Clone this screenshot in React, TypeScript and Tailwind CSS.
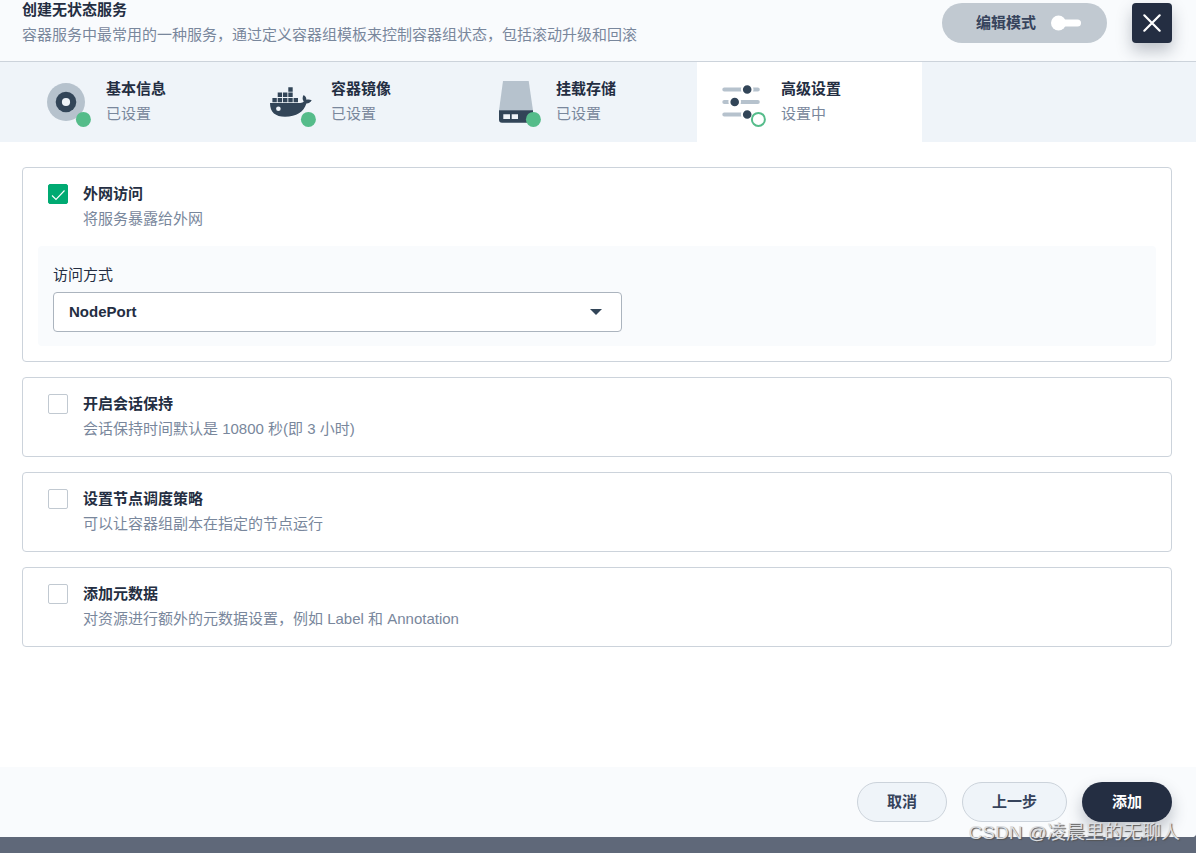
import { useState } from 'react';
import type { ReactNode } from 'react';

interface Step {
  id: string;
  title: string;
  status: string;
  done: boolean;
  icon: ReactNode;
}

const STEPS: Step[] = [
  {
    id: 'basic',
    title: '基本信息',
    status: '已设置',
    done: true,
    icon: (
      <>
        <circle cx="24" cy="26" r="19" fill="#b6c2cd" />
        <circle cx="24" cy="26" r="10.3" fill="#324558" />
        <circle cx="24" cy="26" r="4.1" fill="#eff4f9" />
      </>
    ),
  },
  {
    id: 'image',
    title: '容器镜像',
    status: '已设置',
    done: true,
    icon: (
      <g fill="#324558">
        <path d="M21.3 11.3h4.4v4.4h-4.4zM10.7 16.6h4.4v4.4h-4.4zM16 16.6h4.4v4.4H16zM21.3 16.6h4.4v4.4h-4.4zM5.4 21.9h4.4v4.4H5.4zM10.7 21.9h4.4v4.4h-4.4zM16 21.9h4.4v4.4H16zM21.3 21.9h4.4v4.4h-4.4zM26.6 21.9H31v4.4h-4.4z" />
        <path d="M3 27h30.2c1.8 0 3-.5 3.6-1.4-1.6-2-1.5-4.6-.1-6.6 1.8 1.2 2.7 2.8 2.7 4.7 1.9-.5 3.7-.3 5.3.6-.9 2-2.7 3.1-5.3 3.2C36.6 36 29.5 40.700 18 40.700 8.500 40.700 3 36.500 3 27z" />
        <circle cx="11.4" cy="32.7" r="2.3" fill="#eff4f9" />
      </g>
    ),
  },
  {
    id: 'volume',
    title: '挂载存储',
    status: '已设置',
    done: true,
    icon: (
      <>
        <path d="M11 5h25.700L41 34.500H7z" fill="#b6c2cd" />
        <path d="M7 34.300h34v9.400a3 3 0 0 1-3 3H10a3 3 0 0 1-3-3z" fill="#324558" />
        <path d="M11.300 38.300H18V43h-6.700zM19.700 38.300H26V43h-6.300z" fill="#eff4f9" />
      </>
    ),
  },
  {
    id: 'advanced',
    title: '高级设置',
    status: '设置中',
    done: false,
    icon: (
      <>
        <path d="M7.300 13.500h33.500M7.300 26h33.500M7.300 38.500h22" stroke="#b6c2cd" strokeWidth="4" strokeLinecap="round" />
        <g fill="#324558" stroke="#fff" strokeWidth="2">
          <circle cx="30.200" cy="13.500" r="5.300" />
          <circle cx="17.700" cy="26" r="5.300" />
          <circle cx="30.200" cy="38.500" r="5.300" />
        </g>
      </>
    ),
  },
];

function StepTab({ step, active, onSelect }: { step: Step; active: boolean; onSelect: () => void }) {
  return (
    <button
      type="button"
      aria-current={active ? 'step' : undefined}
      onClick={onSelect}
      className={`flex h-20 w-[225px] shrink-0 items-center gap-3 pl-5 text-left ${active ? 'bg-white' : ''}`}
    >
      <svg viewBox="0 0 52 52" fill="none" className="h-[52px] w-[52px]" aria-hidden="true">
        {step.icon}
        {step.done ? (
          <circle cx="41.4" cy="43.4" r="7.5" fill="#55bc8a" />
        ) : (
          <circle cx="41.4" cy="43.4" r="6.5" fill="#fff" stroke="#55bc8a" strokeWidth="2" />
        )}
      </svg>
      <span className="flex flex-col gap-[5px] pb-[2px]">
        <span className="font-bold">{step.title}</span>
        <span className="text-[#79879c]">{step.status}</span>
      </span>
    </button>
  );
}

interface OptionCardProps {
  id: string;
  title: string;
  description: string;
  defaultChecked?: boolean;
  children?: ReactNode;
}

function OptionCard({ id, title, description, defaultChecked = false, children }: OptionCardProps) {
  const [checked, setChecked] = useState(defaultChecked);

  return (
    <section className="rounded border border-[#ccd3db] bg-white">
      <div className="flex items-start gap-[15px] px-[25px] pt-4 pb-[17px]">
        <span className="relative h-5 w-5 shrink-0">
          <input
            id={id}
            type="checkbox"
            checked={checked}
            onChange={(e) => setChecked(e.target.checked)}
            className="block h-5 w-5 appearance-none rounded-xs border border-[#c1c9d1] bg-white checked:border-[#00aa72] checked:bg-[#00aa72]"
          />
          {checked && (
            <svg viewBox="0 0 20 20" fill="none" className="pointer-events-none absolute inset-0 h-5 w-5" aria-hidden="true">
              <path d="M4 11.5l4 4 8.5-9" stroke="#fff" strokeWidth="1.1" />
            </svg>
          )}
        </span>
        <label htmlFor={id} className="flex flex-col gap-[5px]">
          <span className="font-bold">{title}</span>
          <span className="text-[#79879c]">{description}</span>
        </label>
      </div>
      {checked && children}
    </section>
  );
}

export default function App() {
  const [current, setCurrent] = useState('advanced');

  return (
    <div className="relative flex min-h-screen flex-col bg-[#5f6879] pb-4 font-['Liberation_Sans','Noto_Sans_CJK_SC',sans-serif] text-[15px] leading-5 text-[#242e42]">
      <div className="flex flex-1 flex-col rounded-br bg-white">
        <header className="flex items-start justify-between border-b border-[#ccd3db] bg-[#f9fbfd] pr-6 pb-4 pl-[22px]">
          <div className="flex flex-col gap-[5px]">
            <h1 className="font-bold">创建无状态服务</h1>
            <p className="text-[#79879c]">容器服务中最常用的一种服务，通过定义容器组模板来控制容器组状态，包括滚动升级和回滚</p>
          </div>
          <div className="flex gap-[25px] pt-[3px]">
            <button
              type="button"
              className="flex h-10 w-[165px] items-center justify-center gap-[15px] rounded-full bg-[#c1c9d1] pl-2 font-bold text-[#36435c]"
            >
              编辑模式
              <svg viewBox="0 0 30 16" className="h-4 w-[30px]" fill="#fff" aria-hidden="true">
                <rect x="8" y="4.5" width="22" height="7" rx="3.5" />
                <circle cx="7.5" cy="8" r="7.5" />
              </svg>
            </button>
            <button
              type="button"
              aria-label="关闭"
              className="flex h-10 w-10 items-center justify-center rounded bg-[#242e42] shadow-[0_8px_16px_rgba(36,46,66,0.28)]"
            >
              <svg viewBox="0 0 20 20" className="h-5 w-5" fill="none" aria-hidden="true">
                <path d="M2.3 2.3l15.4 15.4M17.7 2.3L2.3 17.7" stroke="#fff" strokeWidth="2.2" strokeLinecap="round" />
              </svg>
            </button>
          </div>
        </header>

        <nav className="flex bg-[#eff4f9] pl-[22px]">
          {STEPS.map((step) => (
            <StepTab key={step.id} step={step} active={step.id === current} onSelect={() => setCurrent(step.id)} />
          ))}
        </nav>

        <main className="flex flex-1 flex-col gap-[15px] pt-[25px] pr-6 pb-[25px] pl-[22px]">
          <OptionCard id="internet" title="外网访问" description="将服务暴露给外网" defaultChecked>
            <div className="mx-[15px] mb-[15px] rounded bg-[#f9fbfd] px-[15px] pt-[19px] pb-[14px]">
              <label htmlFor="access-mode" className="mb-[7px] block">
                访问方式
              </label>
              <div className="relative max-w-[569px]">
                <select
                  id="access-mode"
                  defaultValue="NodePort"
                  className="block h-10 w-full appearance-none rounded border border-[#abb4be] bg-white px-[15px] font-bold"
                >
                  <option>NodePort</option>
                  <option>LoadBalancer</option>
                </select>
                <svg viewBox="0 0 12 6" className="pointer-events-none absolute top-[17px] right-5 h-[6px] w-3" aria-hidden="true">
                  <path d="M0 0h12L6 6z" fill="#324558" />
                </svg>
              </div>
            </div>
          </OptionCard>
          <OptionCard id="session" title="开启会话保持" description="会话保持时间默认是 10800 秒(即 3 小时)" />
          <OptionCard id="schedule" title="设置节点调度策略" description="可以让容器组副本在指定的节点运行" />
          <OptionCard id="metadata" title="添加元数据" description="对资源进行额外的元数据设置，例如 Label 和 Annotation" />
        </main>

        <footer className="flex justify-end gap-[15px] rounded-br bg-[#f9fbfd] py-[15px] pr-6">
          <button type="button" className="h-10 w-[90px] rounded-full border border-[#ccd3db] bg-[#eff4f9] font-bold text-[#36435c]">
            取消
          </button>
          <button type="button" className="h-10 w-[105px] rounded-full border border-[#ccd3db] bg-[#eff4f9] font-bold text-[#36435c]">
            上一步
          </button>
          <button type="button" className="h-10 w-[90px] rounded-full bg-[#242e42] font-bold text-white shadow-[0_8px_16px_rgba(36,46,66,0.28)]">
            添加
          </button>
        </footer>
      </div>

      <p className="pointer-events-none absolute right-4 bottom-2 text-[19px] leading-6 text-[#dcdee1] [text-shadow:1px_1px_1px_#555]">
        CSDN @凌晨里的无聊人
      </p>
    </div>
  );
}
